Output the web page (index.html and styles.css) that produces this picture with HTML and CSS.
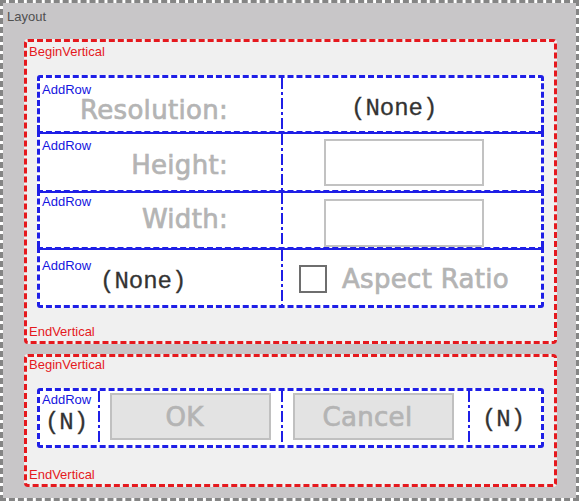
FILE: index.html
```html
<!DOCTYPE html>
<html>
<head>
<meta charset="utf-8">
<title>Layout</title>
<link rel="stylesheet" href="styles.css">
</head>
<body>
<div class="layout">
  <div class="layout-label">Layout</div>

  <div class="vbox vbox-main">
    <div class="vlabel">BeginVertical</div>
    <div class="rows">
      <div class="row row-1">
        <div class="cell cell-left big pt-res">Resolution:</div>
        <div class="vdiv"></div>
        <div class="cell cell-right mono pt-none1 pl-none1">(None)</div>
        <span class="addrow a1">AddRow</span>
      </div>
      <div class="row row-2 row-next">
        <div class="cell cell-left big pt-height">Height:</div>
        <div class="vdiv"></div>
        <div class="cell cell-right"><div class="field field-1"></div></div>
        <span class="addrow a2">AddRow</span>
      </div>
      <div class="row row-3 row-next">
        <div class="cell cell-left big pt-width">Width:</div>
        <div class="vdiv"></div>
        <div class="cell cell-right"><div class="field field-2"></div></div>
        <span class="addrow a3">AddRow</span>
      </div>
      <div class="row row-4 row-next row-last">
        <div class="cell cell-left-plain mono pt-none2 pl-none2">(None)</div>
        <div class="vdiv"></div>
        <div class="cell cell-right check-cell">
          <div class="check"></div>
          <div class="big aspect">Aspect Ratio</div>
        </div>
        <span class="addrow a4">AddRow</span>
      </div>
    </div>
    <div class="vlabel end-main">EndVertical</div>
  </div>

  <div class="vbox vbox-foot">
    <div class="vlabel">BeginVertical</div>
    <div class="rows">
      <div class="row row-btn row-last">
        <div class="cell c-n1 mono">(N)</div>
        <div class="vdiv"></div>
        <div class="cell c-ok"><div class="btn big">OK</div></div>
        <div class="vdiv"></div>
        <div class="cell c-cancel"><div class="btn big">Cancel</div></div>
        <div class="vdiv"></div>
        <div class="cell c-n2 mono">(N)</div>
        <span class="addrow a5">AddRow</span>
      </div>
    </div>
    <div class="vlabel end-foot">EndVertical</div>
  </div>
</div>
</body>
</html>
```

FILE: styles.css
```css
html, body {
  margin: 0;
  padding: 0;
  background: #ffffff;
}

.layout {
  width: 579px;
  height: 501px;
  box-sizing: border-box;
  border: 3px dashed #858585;
  background: #c8c6c8;
  background-clip: padding-box;
  padding: 6px 19px 0 4px;
  font-family: "Liberation Sans", Arial, sans-serif;
}

.layout-label {
  font-size: 13px;
  line-height: 16px;
  height: 16px;
  color: #505050;
}

.vbox {
  margin-left: 17px;
  width: 533px;
  box-sizing: border-box;
  border: 3px dashed #e5191e;
  border-radius: 4px;
  background: #f0f0f0;
}

.vbox-main {
  margin-top: 14px;
  height: 305px;
  padding: 2px 0 1px;
}

.vbox-foot {
  margin-top: 10px;
  height: 133px;
  padding: 0 0 1px;
}

.vlabel {
  font-size: 13px;
  line-height: 16px;
  color: #e5191e;
  padding-left: 2px;
}

.end-main { margin-top: 16px; }
.end-foot { margin-top: 19px; }

.rows {
  margin: 15px 10px 0;
}

.row {
  position: relative;
  display: flex;
  box-sizing: border-box;
  border: 3px dashed #1f1fe6;
  border-bottom: 0;
  background: #ffffff;
}

.row-1 { border-radius: 3px 3px 0 0; }

.row-next {
  background: linear-gradient(#1f1fe6, #1f1fe6) 0 1px / 100% 2px no-repeat border-box, #ffffff;
}

.row-last {
  border-bottom: 3px dashed #1f1fe6;
  border-radius: 0 0 3px 3px;
}

.row-btn { border-radius: 3px; }

.row-1 { height: 56px; }
.row-2 { height: 59px; }
.row-3 { height: 57px; }
.row-4 { height: 61px; }
.row-btn { height: 60px; }

.cell {
  box-sizing: border-box;
}

.cell-left {
  width: 241px;
  flex: none;
  text-align: right;
  padding-right: 53px;
}

.cell-left-plain {
  width: 241px;
  flex: none;
}

.cell-right {
  flex: 1;
}

.vdiv {
  width: 2px;
  flex: none;
  background: repeating-linear-gradient(to bottom,
    #1f1fe6 0, #1f1fe6 11px,
    transparent 11px, transparent 14px,
    #1f1fe6 14px, #1f1fe6 17px,
    transparent 17px, transparent 20px);
}

.big {
  font-family: "DejaVu Sans", Verdana, sans-serif;
  font-size: 26px;
  line-height: 30px;
  color: #b4b4b4;
  white-space: nowrap;
  letter-spacing: 0.3px;
  -webkit-text-stroke: 0.7px #b4b4b4;
}

.mono {
  font-family: "Liberation Mono", "Courier New", monospace;
  font-size: 24px;
  line-height: 30px;
  color: #333333;
  white-space: nowrap;
  -webkit-text-stroke: 0.3px #333333;
}

.pt-res { padding-top: 17px; }
.pt-height { padding-top: 16px; }
.pt-width { padding-top: 11px; }
.pt-none1 { padding-top: 16px; }
.pl-none1 { padding-left: 68px; }
.pt-none2 { padding-top: 17px; }
.pl-none2 { padding-left: 60px; }

.field {
  box-sizing: border-box;
  width: 160px;
  height: 47px;
  margin-left: 41px;
  border: 2px solid #c2c2c2;
  background: #ffffff;
}

.field-1 { margin-top: 5px; }
.field-2 { margin-top: 6px; height: 48px; }

.check-cell {
  display: flex;
  align-items: flex-start;
}

.check {
  box-sizing: border-box;
  width: 28px;
  height: 28px;
  flex: none;
  margin: 15px 0 0 16px;
  border: 2px solid #6e6e6e;
  background: #ffffff;
}

.aspect {
  margin: 14px 0 0 15px;
}

.addrow {
  position: absolute;
  font-size: 13px;
  line-height: 16px;
  color: #1515e0;
  left: 2px;
}

.a1 { top: 4px; }
.a2 { top: 4px; }
.a3 { top: 1px; }
.a4 { top: 8px; }
.a5 { top: 1px; }

.c-n1 {
  width: 58px;
  flex: none;
  text-align: center;
  padding: 17px 5px 0 0;
}

.c-ok {
  width: 181px;
  flex: none;
}

.c-cancel {
  width: 185px;
  flex: none;
}

.c-n2 {
  width: 71px;
  flex: none;
  text-align: center;
  padding: 14px 4px 0 0;
}

.btn {
  box-sizing: border-box;
  width: 161px;
  height: 47px;
  margin: 2px 0 0 10px;
  border: 2px solid #c0c0c0;
  background: #e3e3e3;
  display: flex;
  align-items: center;
  justify-content: center;
  padding-right: 12px;
}
```
